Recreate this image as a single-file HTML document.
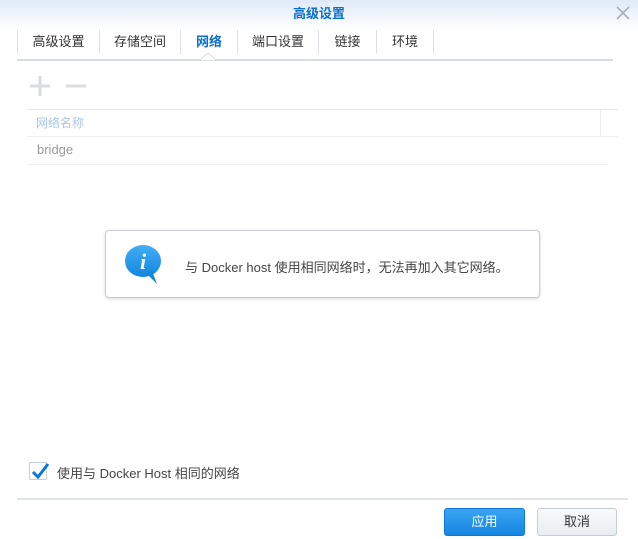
<!DOCTYPE html>
<html><head><meta charset="utf-8"><style>
*{margin:0;padding:0;box-sizing:border-box}
body{width:638px;height:539px;background:#fff;position:relative;overflow:hidden;font-family:"Liberation Sans","Noto Sans CJK SC",sans-serif;font-size:12px;color:#333}
.abs{position:absolute}
.title{left:0;top:0;width:638px;height:30px;background:linear-gradient(#dfeaf7,#fff);text-align:center;line-height:28px;color:#0a6fd0;font-size:13px;font-weight:bold}
.tab{top:30px;height:24px;line-height:24px;text-align:center;color:#333;font-size:13px;border-right:1px solid #dbe1e8}
</style></head><body>
<div class="abs title">高级设置</div>
<svg class="abs" style="left:616px;top:6px" width="14" height="14"><path d="M1 1L13 13M13 1L1 13" stroke="#a9afb6" stroke-width="1.6"/></svg>
<div class="abs" style="left:17px;top:30px;width:1px;height:24px;background:#dbe1e8"></div>
<div class="abs tab" style="left:18px;width:82px">高级设置</div>
<div class="abs tab" style="left:100px;width:81px">存储空间</div>
<div class="abs tab" style="left:181px;width:57px;color:#0a6fd0;font-weight:bold">网络</div>
<div class="abs tab" style="left:238px;width:81px">端口设置</div>
<div class="abs tab" style="left:319px;width:58px">链接</div>
<div class="abs tab" style="left:377px;width:57px">环境</div>
<div class="abs" style="left:17px;top:59px;width:596px;height:2px;background:#d8dde3"></div>
<svg class="abs" style="left:200px;top:53px" width="16" height="8"><path d="M0 7L8 0L16 7" fill="#fff" stroke="#d8dde3"/></svg>
<svg class="abs" style="left:28px;top:76px" width="62" height="20"><path d="M2 10H22M12 0V20" stroke="#d9dcdf" stroke-width="3"/><path d="M38 10H58" stroke="#d9dcdf" stroke-width="3"/></svg>
<div class="abs" style="left:27px;top:109px;width:591px;height:1px;background:#e6e9ec"></div>
<div class="abs" style="left:600px;top:110px;width:1px;height:26px;background:#eceef0"></div>
<div class="abs" style="left:36px;top:114px;color:#a9c4e6;font-size:12px">网络名称</div>
<div class="abs" style="left:27px;top:136px;width:591px;height:1px;background:#eef0f2"></div>
<div class="abs" style="left:37px;top:142px;color:#999;font-size:13px">bridge</div>
<div class="abs" style="left:27px;top:164px;width:581px;height:1px;background:#eef0f2"></div>
<div class="abs" style="left:105px;top:230px;width:435px;height:68px;border:1px solid #c8ced6;border-radius:4px;box-shadow:0 1px 3px rgba(0,0,0,.15);background:#fff"></div>
<svg class="abs" style="left:124px;top:242px" width="44" height="44"><defs><linearGradient id="g" x1="0" y1="0" x2="0" y2="1"><stop offset="0" stop-color="#44aef5"/><stop offset="1" stop-color="#1286e0"/></linearGradient></defs><ellipse cx="19" cy="19" rx="18" ry="16" fill="url(#g)"/><path d="M22 31L33 42L28 29Z" fill="#1286e0"/><text x="19" y="27" text-anchor="middle" fill="#fff" font-family="Liberation Serif,serif" font-style="italic" font-weight="bold" font-size="22">i</text></svg>
<div class="abs" style="left:185px;top:257px;font-size:13px;color:#444">与 Docker host 使用相同网络时，无法再加入其它网络。</div>
<div class="abs" style="left:29px;top:462px;width:18px;height:18px;border:1px solid #c9ced4;border-radius:2px;background:#fff"></div>
<svg class="abs" style="left:30px;top:461px" width="20" height="20"><path d="M3 11L8 16L18 3" fill="none" stroke="#0a78d8" stroke-width="3"/></svg>
<div class="abs" style="left:57px;top:463px;font-size:13px;color:#444">使用与 Docker Host 相同的网络</div>
<div class="abs" style="left:17px;top:498px;width:611px;height:2px;background:#e2e5e8"></div>
<div class="abs" style="left:444px;top:508px;width:81px;height:28px;border:1px solid #0f7ad6;border-radius:3px;background:linear-gradient(#3aa3f2,#1586e2);color:#fff;text-align:center;line-height:26px;font-size:13px">应用</div>
<div class="abs" style="left:537px;top:508px;width:80px;height:28px;border:1px solid #c6ccd3;border-radius:3px;background:linear-gradient(#f8f9fa,#e9edf1);color:#333;text-align:center;line-height:26px;font-size:13px">取消</div>
</body></html>
